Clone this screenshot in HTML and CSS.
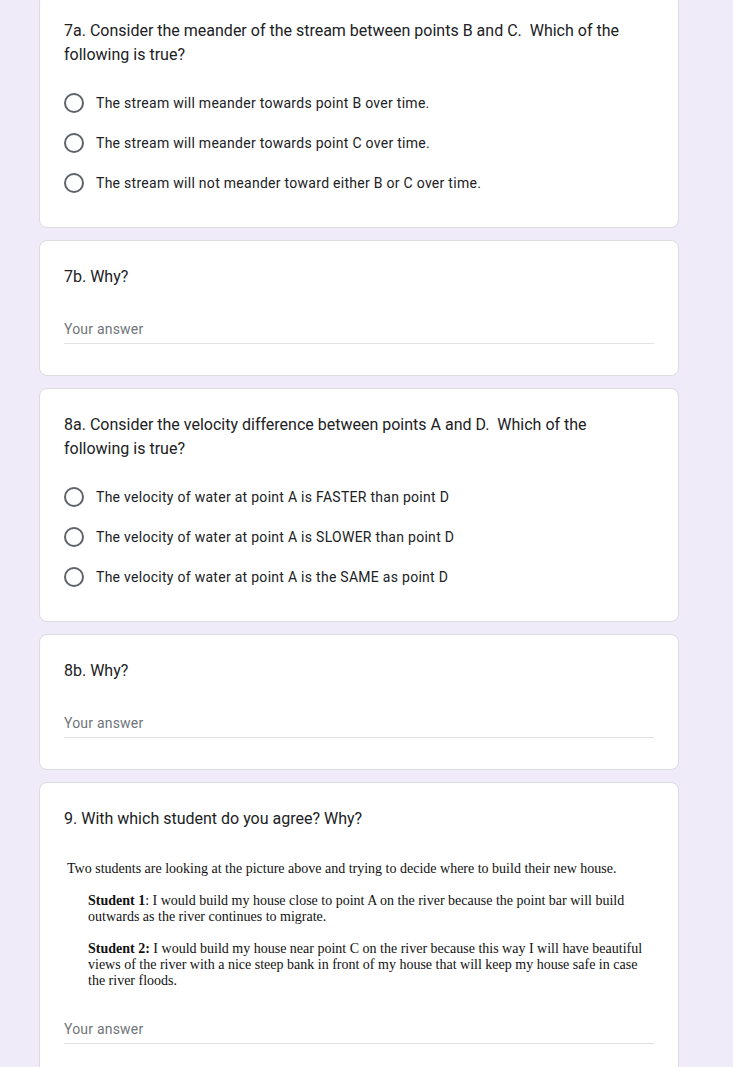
FILE: index.html
```html
<!DOCTYPE html>
<html lang="en">
<head>
<meta charset="utf-8">
<title>Form</title>
<link rel="stylesheet" href="styles.css">
</head>
<body>
<main class="page">
  <section class="card">
    <div class="q-title">7a. Consider the meander of the stream between points B and C.&nbsp; Which of the following is true?</div>
    <div class="options">
      <label class="option"><span class="radio"></span><span class="opt-text">The stream will meander towards point B over time.</span></label>
      <label class="option"><span class="radio"></span><span class="opt-text">The stream will meander towards point C over time.</span></label>
      <label class="option"><span class="radio"></span><span class="opt-text">The stream will not meander toward either B or C over time.</span></label>
    </div>
  </section>

  <section class="card">
    <div class="q-title">7b. Why?</div>
    <div class="answer"><span class="answer-text">Your answer</span></div>
  </section>

  <section class="card">
    <div class="q-title">8a. Consider the velocity difference between points A and D.&nbsp; Which of the following is true?</div>
    <div class="options">
      <label class="option"><span class="radio"></span><span class="opt-text">The velocity of water at point A is FASTER than point D</span></label>
      <label class="option"><span class="radio"></span><span class="opt-text">The velocity of water at point A is SLOWER than point D</span></label>
      <label class="option"><span class="radio"></span><span class="opt-text">The velocity of water at point A is the SAME as point D</span></label>
    </div>
  </section>

  <section class="card">
    <div class="q-title">8b. Why?</div>
    <div class="answer"><span class="answer-text">Your answer</span></div>
  </section>

  <section class="card">
    <div class="q-title">9. With which student do you agree? Why?</div>
    <div class="figure">
      <p class="fig-lead">Two students are looking at the picture above and trying to decide where to build their new house.</p>
      <p class="fig-student"><b>Student 1</b>: I would build my house close to point A on the river because the point bar will build<br>outwards as the river continues to migrate.</p>
      <p class="fig-student"><b>Student 2:</b> I would build my house near point C on the river because this way I will have beautiful<br>views of the river with a nice steep bank in front of my house that will keep my house safe in case<br>the river floods.</p>
    </div>
    <div class="answer"><span class="answer-text">Your answer</span></div>
  </section>
</main>
</body>
</html>
```

FILE: styles.css
```css
html, body {
  margin: 0;
  padding: 0;
  background: #f0ebf8;
}

body {
  font-family: Roboto, "Liberation Sans", Arial, sans-serif;
  color: #202124;
}

.page {
  width: 640px;
  margin: -6px 0 0 39px;
  display: flex;
  flex-direction: column;
  gap: 12px;
  padding-bottom: 40px;
}

.card {
  box-sizing: border-box;
  width: 640px;
  background: #fff;
  border: 1px solid #dadce0;
  border-radius: 8px;
  padding: 24px;
}

.q-title {
  font-size: 16px;
  line-height: 24px;
  letter-spacing: 0;
  color: #202124;
}

.options {
  margin-top: 16px;
  display: flex;
  flex-direction: column;
}

.option {
  display: flex;
  align-items: center;
  height: 40px;
  gap: 12px;
}

.radio {
  box-sizing: border-box;
  width: 20px;
  height: 20px;
  border: 2px solid #5f6368;
  border-radius: 50%;
  flex: none;
}

.opt-text {
  font-size: 14px;
  line-height: 20px;
  letter-spacing: 0.28px;
  color: #202124;
}

.answer {
  margin-top: 30px;
  margin-bottom: 7px;
  border-bottom: 1px solid #e0e0e0;
  padding-bottom: 4px;
}

.answer-text {
  display: block;
  font-size: 14px;
  line-height: 20px;
  letter-spacing: 0.2px;
  color: #70757a;
}

.figure {
  margin-top: 30px;
  padding-left: 3px;
  font-family: "Liberation Serif", "Times New Roman", serif;
  font-size: 14px;
  line-height: 16px;
  color: #111;
  white-space: nowrap;
}

.figure p {
  margin: 0;
}

.fig-student {
  margin-top: 16px !important;
  padding-left: 21px;
}
```
